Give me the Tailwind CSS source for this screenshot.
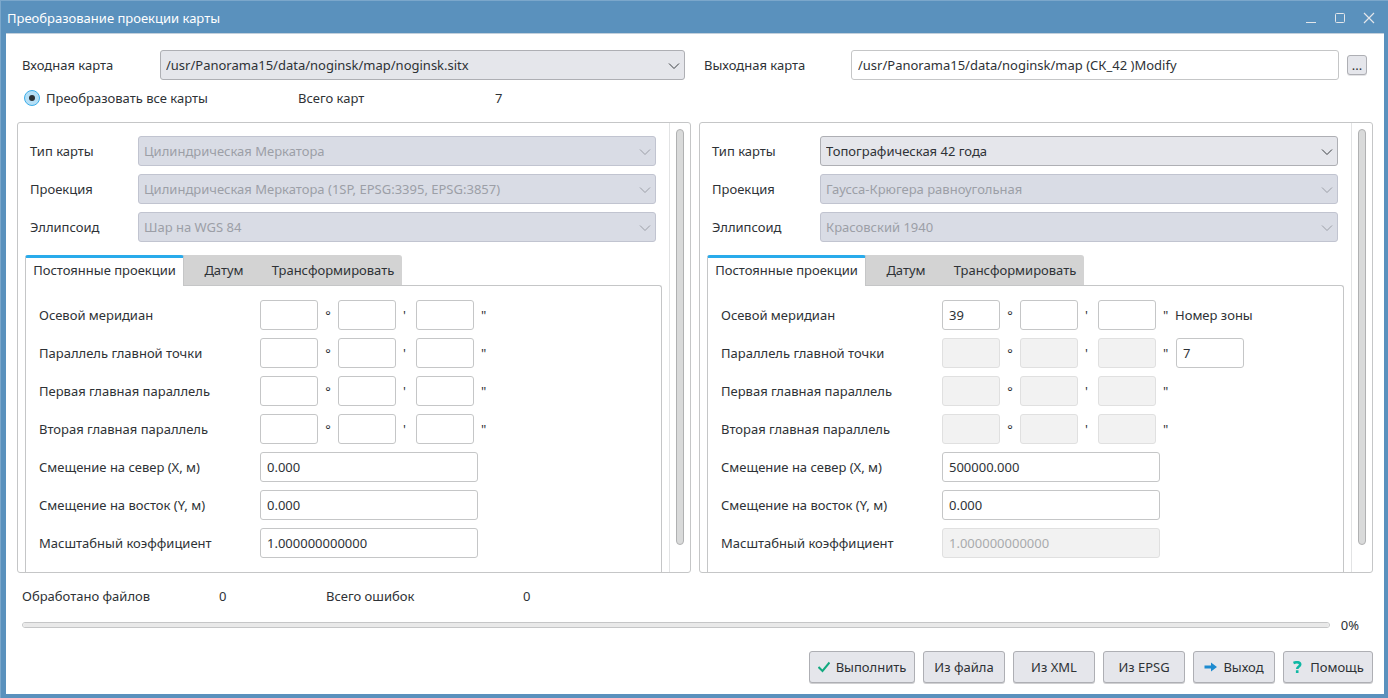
<!DOCTYPE html>
<html lang="ru">
<head>
<meta charset="utf-8">
<meta name="viewport" content="width=device-width, initial-scale=1">
<title>Преобразование проекции карты</title>
<script src="https://cdn.jsdelivr.net/npm/@tailwindcss/browser@4"></script>
</head>
<body class="flex min-h-screen flex-col border-t border-l border-[#7ba7cb] bg-[#5a91bd] pr-1 pb-1 pl-[5px] font-['Noto_Sans',sans-serif] text-[13px] leading-5 text-[#2e3236]">

<header class="flex h-8 items-center justify-between pr-[9px] pl-px text-white">
  <h1 class="pt-[2px]">Преобразование проекции карты</h1>
  <div class="flex gap-[17px] pt-[2px] text-[#e3e6ea]">
    <button type="button" aria-label="Свернуть"><svg class="block size-3" viewBox="0 0 12 12" fill="none" stroke="currentColor"><path d="M1 10.5h10"/></svg></button>
    <button type="button" aria-label="Развернуть"><svg class="block size-3" viewBox="0 0 12 12" fill="none" stroke="currentColor"><rect x="1.5" y="1.5" width="9" height="9" rx="1"/></svg></button>
    <button type="button" aria-label="Закрыть"><svg class="block size-3" viewBox="0 0 12 12" fill="none" stroke="currentColor" stroke-width="1.200"><path d="M1 1l10 10M11 1L1 11"/></svg></button>
  </div>
</header>

<main class="flex flex-1 flex-col border-t border-[#c3d0dc] bg-white px-[11px] pt-4 pb-[11px]">
  <div class="grid grid-cols-2 gap-2">
    <div class="flex items-center pr-[6px] pl-[5px]">
      <label for="src" class="w-[138px]">Входная карта</label>
      <div class="relative flex-1">
        <select id="src" class="block h-[30px] w-full appearance-none rounded-[3px] border border-[#aeafb4] bg-[#e5e6eb] pr-7 pl-[5px]"><option>/usr/Panorama15/data/noginsk/map/noginsk.sitx</option></select>
        <svg class="pointer-events-none absolute top-[10px] right-[5px] size-3" viewBox="0 0 12 12" fill="none" stroke="#3b3f43"><path d="M1 3.500l5 5 5-5"/></svg>
      </div>
    </div>
    <div class="flex items-center pr-[6px] pl-[5px]">
      <label for="dst" class="w-[147px]">Выходная карта</label>
      <input id="dst" type="text" value="/usr/Panorama15/data/noginsk/map (СК_42 )Modify" class="h-[30px] min-w-0 flex-1 rounded-[3px] border border-[#c5c6c7] px-[6px]">
      <button type="button" aria-label="Выбрать файл" class="ml-2 flex size-5 items-center justify-center rounded-[3px] border border-[#aeafb4] bg-[#e5e6eb] shadow-[0_1px_0_#e4e4e6]">...</button>
    </div>
  </div>

  <div class="mt-2 flex items-center pl-[7px]">
    <label class="flex w-[274px] items-center gap-[6px]">
      <input type="radio" name="scope" checked class="grid size-4 appearance-none place-content-center rounded-full border border-[#3daee9] bg-[#b5dff6] before:size-[6px] before:rounded-full before:bg-[#2b3034]">
      Преобразовать все карты
    </label>
    <span class="w-[197px]">Всего карт</span>
    <span>7</span>
  </div>

  <div class="mt-[14px] grid flex-1 grid-cols-2 gap-2">

    <section aria-label="Входная карта" class="flex overflow-hidden rounded-[3px] border border-[#c5c6c7]">
      <div class="flex flex-1 flex-col pt-[13px]">
        <div class="flex flex-col gap-2 pr-[13px] pl-3">
          <div class="flex items-center">
            <label for="type1" class="w-[108px]">Тип карты</label>
            <div class="relative flex-1">
              <select id="type1" disabled class="block h-[30px] w-full appearance-none rounded-[3px] border border-[#c1c4d0] bg-[#d9dce5] pr-7 pl-[5px] text-[#9c9fa7] opacity-100"><option>Цилиндрическая Меркатора</option></select>
              <svg class="pointer-events-none absolute top-[10px] right-[5px] size-3" viewBox="0 0 12 12" fill="none" stroke="#9c9fa7"><path d="M1 3.500l5 5 5-5"/></svg>
            </div>
          </div>
          <div class="flex items-center">
            <label for="proj1" class="w-[108px]">Проекция</label>
            <div class="relative flex-1">
              <select id="proj1" disabled class="block h-[30px] w-full appearance-none rounded-[3px] border border-[#c1c4d0] bg-[#d9dce5] pr-7 pl-[5px] text-[#9c9fa7] opacity-100"><option>Цилиндрическая Меркатора (1SP, EPSG:3395, EPSG:3857)</option></select>
              <svg class="pointer-events-none absolute top-[10px] right-[5px] size-3" viewBox="0 0 12 12" fill="none" stroke="#9c9fa7"><path d="M1 3.500l5 5 5-5"/></svg>
            </div>
          </div>
          <div class="flex items-center">
            <label for="ell1" class="w-[108px]">Эллипсоид</label>
            <div class="relative flex-1">
              <select id="ell1" disabled class="block h-[30px] w-full appearance-none rounded-[3px] border border-[#c1c4d0] bg-[#d9dce5] pr-7 pl-[5px] text-[#9c9fa7] opacity-100"><option>Шар на WGS 84</option></select>
              <svg class="pointer-events-none absolute top-[10px] right-[5px] size-3" viewBox="0 0 12 12" fill="none" stroke="#9c9fa7"><path d="M1 3.500l5 5 5-5"/></svg>
            </div>
          </div>
        </div>

        <div role="tablist" class="z-10 mt-[13px] -mb-px ml-[7px] flex h-[31px] w-[377px] rounded-t-[3px] bg-[#d3d3d3]">
          <button type="button" role="tab" aria-selected="true" class="w-[159px] rounded-t-[3px] border-t-3 border-r border-l border-t-[#29abeb] border-r-[#c5c6c7] border-l-[#c5c6c7] bg-white pb-1 text-center whitespace-nowrap">Постоянные проекции</button>
          <button type="button" role="tab" aria-selected="false" class="w-20 border-b border-[#c5c6c7]">Датум</button>
          <button type="button" role="tab" aria-selected="false" class="flex-1 border-b border-[#c5c6c7]">Трансформировать</button>
        </div>

        <div role="tabpanel" aria-label="Постоянные проекции" class="mr-[7px] ml-[7px] flex flex-1 flex-col gap-2 rounded-tr-[3px] border border-b-0 border-[#c5c6c7] pt-[14px] pb-3 pl-[13px]">
          <div class="flex items-center">
            <label for="a1" class="w-[221px]">Осевой меридиан</label>
            <input id="a1" type="text" class="h-[30px] w-[58px] rounded-[3px] border border-[#c5c6c7] px-[6px]">
            <span class="w-5 text-center">°</span>
            <input type="text" aria-label="Осевой меридиан, минуты" class="h-[30px] w-[58px] rounded-[3px] border border-[#c5c6c7] px-[6px]">
            <span class="w-5 pl-[7px]">'</span>
            <input type="text" aria-label="Осевой меридиан, секунды" class="h-[30px] w-[58px] rounded-[3px] border border-[#c5c6c7] px-[6px]">
            <span class="pl-[7px]">"</span>
          </div>
          <div class="flex items-center">
            <label for="b1" class="w-[221px]">Параллель главной точки</label>
            <input id="b1" type="text" class="h-[30px] w-[58px] rounded-[3px] border border-[#c5c6c7] px-[6px]">
            <span class="w-5 text-center">°</span>
            <input type="text" aria-label="Параллель главной точки, минуты" class="h-[30px] w-[58px] rounded-[3px] border border-[#c5c6c7] px-[6px]">
            <span class="w-5 pl-[7px]">'</span>
            <input type="text" aria-label="Параллель главной точки, секунды" class="h-[30px] w-[58px] rounded-[3px] border border-[#c5c6c7] px-[6px]">
            <span class="pl-[7px]">"</span>
          </div>
          <div class="flex items-center">
            <label for="c1" class="w-[221px]">Первая главная параллель</label>
            <input id="c1" type="text" class="h-[30px] w-[58px] rounded-[3px] border border-[#c5c6c7] px-[6px]">
            <span class="w-5 text-center">°</span>
            <input type="text" aria-label="Первая главная параллель, минуты" class="h-[30px] w-[58px] rounded-[3px] border border-[#c5c6c7] px-[6px]">
            <span class="w-5 pl-[7px]">'</span>
            <input type="text" aria-label="Первая главная параллель, секунды" class="h-[30px] w-[58px] rounded-[3px] border border-[#c5c6c7] px-[6px]">
            <span class="pl-[7px]">"</span>
          </div>
          <div class="flex items-center">
            <label for="d1" class="w-[221px]">Вторая главная параллель</label>
            <input id="d1" type="text" class="h-[30px] w-[58px] rounded-[3px] border border-[#c5c6c7] px-[6px]">
            <span class="w-5 text-center">°</span>
            <input type="text" aria-label="Вторая главная параллель, минуты" class="h-[30px] w-[58px] rounded-[3px] border border-[#c5c6c7] px-[6px]">
            <span class="w-5 pl-[7px]">'</span>
            <input type="text" aria-label="Вторая главная параллель, секунды" class="h-[30px] w-[58px] rounded-[3px] border border-[#c5c6c7] px-[6px]">
            <span class="pl-[7px]">"</span>
          </div>
          <div class="flex items-center">
            <label for="e1" class="w-[221px]">Смещение на север (X, м)</label>
            <input id="e1" type="text" value="0.000" class="h-[30px] w-[218px] rounded-[3px] border border-[#c5c6c7] px-[6px]">
          </div>
          <div class="flex items-center">
            <label for="f1" class="w-[221px]">Смещение на восток (Y, м)</label>
            <input id="f1" type="text" value="0.000" class="h-[30px] w-[218px] rounded-[3px] border border-[#c5c6c7] px-[6px]">
          </div>
          <div class="flex items-center">
            <label for="g1" class="w-[221px]">Масштабный коэффициент</label>
            <input id="g1" type="text" value="1.000000000000" class="h-[30px] w-[218px] rounded-[3px] border border-[#c5c6c7] px-[6px]">
          </div>
        </div>
      </div>
      <div class="w-[21px] border-l border-[#e2e3e4] px-[6px] pt-[6px]">
        <div class="h-[94%] w-2 rounded-full border border-[#b0b1b2] bg-[#d9dada]"></div>
      </div>
    </section>

    <section aria-label="Выходная карта" class="flex overflow-hidden rounded-[3px] border border-[#c5c6c7]">
      <div class="flex flex-1 flex-col pt-[13px]">
        <div class="flex flex-col gap-2 pr-[13px] pl-3">
          <div class="flex items-center">
            <label for="type2" class="w-[108px]">Тип карты</label>
            <div class="relative flex-1">
              <select id="type2" class="block h-[30px] w-full appearance-none rounded-[3px] border border-[#aeafb4] bg-[#e5e6eb] pr-7 pl-[5px]"><option>Топографическая 42 года</option></select>
              <svg class="pointer-events-none absolute top-[10px] right-[5px] size-3" viewBox="0 0 12 12" fill="none" stroke="#3b3f43"><path d="M1 3.500l5 5 5-5"/></svg>
            </div>
          </div>
          <div class="flex items-center">
            <label for="proj2" class="w-[108px]">Проекция</label>
            <div class="relative flex-1">
              <select id="proj2" disabled class="block h-[30px] w-full appearance-none rounded-[3px] border border-[#c1c4d0] bg-[#d9dce5] pr-7 pl-[5px] text-[#9c9fa7] opacity-100"><option>Гаусса-Крюгера равноугольная</option></select>
              <svg class="pointer-events-none absolute top-[10px] right-[5px] size-3" viewBox="0 0 12 12" fill="none" stroke="#9c9fa7"><path d="M1 3.500l5 5 5-5"/></svg>
            </div>
          </div>
          <div class="flex items-center">
            <label for="ell2" class="w-[108px]">Эллипсоид</label>
            <div class="relative flex-1">
              <select id="ell2" disabled class="block h-[30px] w-full appearance-none rounded-[3px] border border-[#c1c4d0] bg-[#d9dce5] pr-7 pl-[5px] text-[#9c9fa7] opacity-100"><option>Красовский 1940</option></select>
              <svg class="pointer-events-none absolute top-[10px] right-[5px] size-3" viewBox="0 0 12 12" fill="none" stroke="#9c9fa7"><path d="M1 3.500l5 5 5-5"/></svg>
            </div>
          </div>
        </div>

        <div role="tablist" class="z-10 mt-[13px] -mb-px ml-[7px] flex h-[31px] w-[377px] rounded-t-[3px] bg-[#d3d3d3]">
          <button type="button" role="tab" aria-selected="true" class="w-[159px] rounded-t-[3px] border-t-3 border-r border-l border-t-[#29abeb] border-r-[#c5c6c7] border-l-[#c5c6c7] bg-white pb-1 text-center whitespace-nowrap">Постоянные проекции</button>
          <button type="button" role="tab" aria-selected="false" class="w-20 border-b border-[#c5c6c7]">Датум</button>
          <button type="button" role="tab" aria-selected="false" class="flex-1 border-b border-[#c5c6c7]">Трансформировать</button>
        </div>

        <div role="tabpanel" aria-label="Постоянные проекции" class="mr-[7px] ml-[7px] flex flex-1 flex-col gap-2 rounded-tr-[3px] border border-b-0 border-[#c5c6c7] pt-[14px] pb-3 pl-[13px]">
          <div class="flex items-center">
            <label for="a2" class="w-[221px]">Осевой меридиан</label>
            <input id="a2" type="text" value="39" class="h-[30px] w-[58px] rounded-[3px] border border-[#c5c6c7] px-[6px]">
            <span class="w-5 text-center">°</span>
            <input type="text" aria-label="Осевой меридиан, минуты" class="h-[30px] w-[58px] rounded-[3px] border border-[#c5c6c7] px-[6px]">
            <span class="w-5 pl-[7px]">'</span>
            <input type="text" aria-label="Осевой меридиан, секунды" class="h-[30px] w-[58px] rounded-[3px] border border-[#c5c6c7] px-[6px]">
            <span class="w-[19px] pl-[7px]">"</span>
            <label for="zone">Номер зоны</label>
          </div>
          <div class="flex items-center">
            <label for="b2" class="w-[221px]">Параллель главной точки</label>
            <input id="b2" type="text" disabled class="h-[30px] w-[58px] rounded-[3px] border border-[#e0e0e0] bg-[#f2f2f2] px-[6px]">
            <span class="w-5 text-center">°</span>
            <input type="text" disabled aria-label="Параллель главной точки, минуты" class="h-[30px] w-[58px] rounded-[3px] border border-[#e0e0e0] bg-[#f2f2f2] px-[6px]">
            <span class="w-5 pl-[7px]">'</span>
            <input type="text" disabled aria-label="Параллель главной точки, секунды" class="h-[30px] w-[58px] rounded-[3px] border border-[#e0e0e0] bg-[#f2f2f2] px-[6px]">
            <span class="w-5 pl-[7px]">"</span>
            <input id="zone" type="text" value="7" class="h-[30px] w-[68px] rounded-[3px] border border-[#c5c6c7] px-[6px]">
          </div>
          <div class="flex items-center">
            <label for="c2" class="w-[221px]">Первая главная параллель</label>
            <input id="c2" type="text" disabled class="h-[30px] w-[58px] rounded-[3px] border border-[#e0e0e0] bg-[#f2f2f2] px-[6px]">
            <span class="w-5 text-center">°</span>
            <input type="text" disabled aria-label="Первая главная параллель, минуты" class="h-[30px] w-[58px] rounded-[3px] border border-[#e0e0e0] bg-[#f2f2f2] px-[6px]">
            <span class="w-5 pl-[7px]">'</span>
            <input type="text" disabled aria-label="Первая главная параллель, секунды" class="h-[30px] w-[58px] rounded-[3px] border border-[#e0e0e0] bg-[#f2f2f2] px-[6px]">
            <span class="pl-[7px]">"</span>
          </div>
          <div class="flex items-center">
            <label for="d2" class="w-[221px]">Вторая главная параллель</label>
            <input id="d2" type="text" disabled class="h-[30px] w-[58px] rounded-[3px] border border-[#e0e0e0] bg-[#f2f2f2] px-[6px]">
            <span class="w-5 text-center">°</span>
            <input type="text" disabled aria-label="Вторая главная параллель, минуты" class="h-[30px] w-[58px] rounded-[3px] border border-[#e0e0e0] bg-[#f2f2f2] px-[6px]">
            <span class="w-5 pl-[7px]">'</span>
            <input type="text" disabled aria-label="Вторая главная параллель, секунды" class="h-[30px] w-[58px] rounded-[3px] border border-[#e0e0e0] bg-[#f2f2f2] px-[6px]">
            <span class="pl-[7px]">"</span>
          </div>
          <div class="flex items-center">
            <label for="e2" class="w-[221px]">Смещение на север (X, м)</label>
            <input id="e2" type="text" value="500000.000" class="h-[30px] w-[218px] rounded-[3px] border border-[#c5c6c7] px-[6px]">
          </div>
          <div class="flex items-center">
            <label for="f2" class="w-[221px]">Смещение на восток (Y, м)</label>
            <input id="f2" type="text" value="0.000" class="h-[30px] w-[218px] rounded-[3px] border border-[#c5c6c7] px-[6px]">
          </div>
          <div class="flex items-center">
            <label for="g2" class="w-[221px]">Масштабный коэффициент</label>
            <input id="g2" type="text" disabled value="1.000000000000" class="h-[30px] w-[218px] rounded-[3px] border border-[#e0e0e0] bg-[#f2f2f2] px-[6px] text-[#a9abad]">
          </div>
        </div>
      </div>
      <div class="w-[21px] border-l border-[#e2e3e4] px-[6px] pt-[6px]">
        <div class="h-[94%] w-2 rounded-full border border-[#b0b1b2] bg-[#d9dada]"></div>
      </div>
    </section>
  </div>

  <div class="mt-[13px] flex pl-[5px]">
    <span class="w-[197px]">Обработано файлов</span>
    <span class="w-[107px]">0</span>
    <span class="w-[197px]">Всего ошибок</span>
    <span>0</span>
  </div>

  <div class="mt-[9px] flex items-center pr-[14px] pl-[5px]">
    <progress id="done" value="0" max="100" aria-label="Ход выполнения" class="h-[6px] min-w-0 flex-1 appearance-none overflow-hidden rounded-full border border-[#c5c6c7] bg-[#e9e9e9] [&::-webkit-progress-bar]:bg-[#e9e9e9] [&::-webkit-progress-value]:bg-[#3daee9]"></progress>
    <label for="done" class="pl-[11px]">0%</label>
  </div>

  <div class="mt-4 flex justify-end gap-2">
    <button type="button" class="flex h-8 w-[106px] items-center justify-center gap-[6px] rounded-[3px] border border-[#aeafb4] bg-[#e5e6eb] shadow-[0_1px_0_#d0d0d2]"><svg class="size-3" viewBox="0 0 12 12" fill="none" stroke="#11a97f" stroke-width="2"><path d="M0.500 6l4 4 7-8.500"/></svg>Выполнить</button>
    <button type="button" class="h-8 w-[82px] rounded-[3px] border border-[#aeafb4] bg-[#e5e6eb] shadow-[0_1px_0_#d0d0d2]">Из файла</button>
    <button type="button" class="h-8 w-[82px] rounded-[3px] border border-[#aeafb4] bg-[#e5e6eb] shadow-[0_1px_0_#d0d0d2]">Из XML</button>
    <button type="button" class="h-8 w-[82px] rounded-[3px] border border-[#aeafb4] bg-[#e5e6eb] shadow-[0_1px_0_#d0d0d2]">Из EPSG</button>
    <button type="button" class="flex h-8 w-[82px] items-center justify-center gap-[6px] rounded-[3px] border border-[#aeafb4] bg-[#e5e6eb] shadow-[0_1px_0_#d0d0d2]"><svg class="h-3 w-[13px]" viewBox="0 0 13 12" fill="#1e8bd0"><path d="M0.500 4.500H7v-3l6 4.500-6 4.500v-3H0.500z"/></svg>Выход</button>
    <button type="button" class="flex h-8 w-[90px] items-center justify-center gap-[6px] rounded-[3px] border border-[#aeafb4] bg-[#e5e6eb] shadow-[0_1px_0_#d0d0d2]"><svg class="size-3" viewBox="0 0 12 12" fill="none" stroke="#0fb8a4" stroke-width="2.600"><path d="M1.500 2C5 0.600 8.200 1.200 8.200 3.500c0 2-3 2-3 4.500M5.200 9.300V12"/></svg>Помощь</button>
  </div>
</main>
</body>
</html>
